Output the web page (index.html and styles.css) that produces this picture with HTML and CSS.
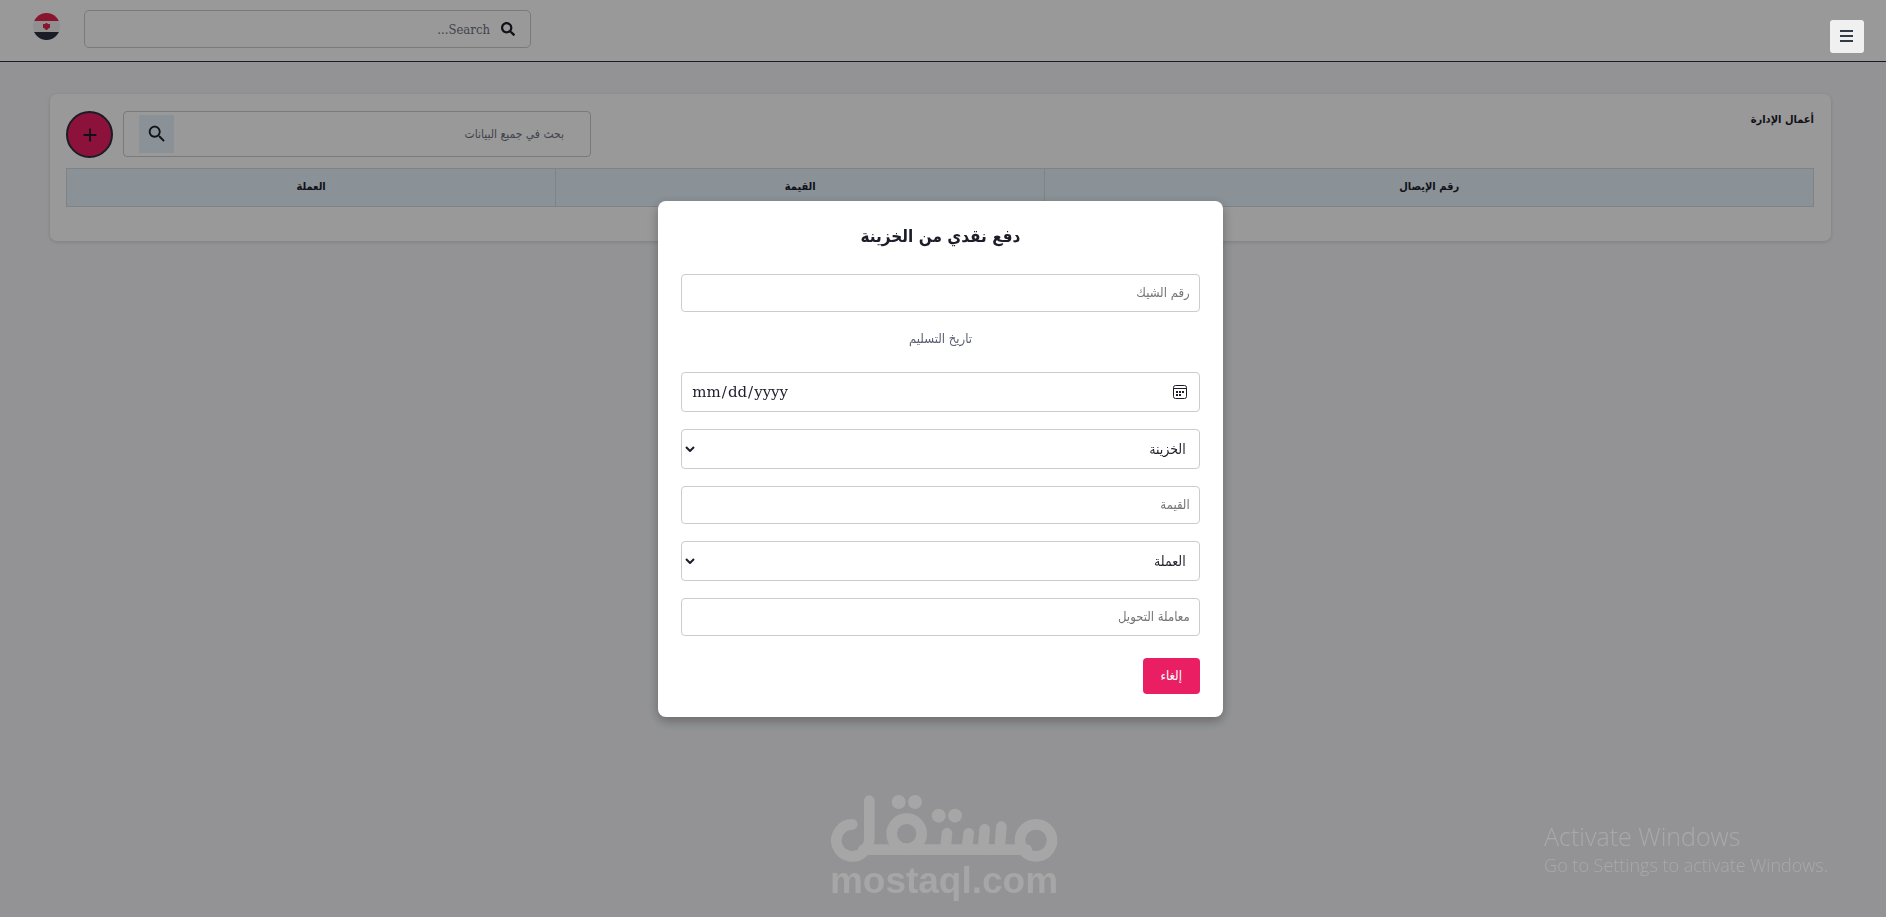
FILE: index.html
```html
<!doctype html>
<html lang="ar" dir="rtl">
<head>
<meta charset="utf-8">
<meta name="viewport" content="width=device-width">
<title>أعمال الإدارة</title>
<link rel="stylesheet" href="styles.css">
</head>
<body>
<div class="page">
	<header class="header">
		<button class="menu-button" type="button" aria-label="القائمة">
			<svg width="13" height="12" viewBox="0 0 13 12"><path d="M0 1h13M0 6h13M0 11h13" stroke="#333a48" stroke-width="2"/></svg>
		</button>
		<div class="header-search">
			<svg width="14" height="14" viewBox="0 0 512 512"><path fill="currentColor" d="M505 442.700L405.300 343c-4.500-4.500-10.600-7-17-7H372c27.600-35.300 44-79.700 44-128C416 93.100 322.900 0 208 0S0 93.100 0 208s93.100 208 208 208c48.300 0 92.700-16.400 128-44v16.300c0 6.400 2.500 12.500 7 17l99.700 99.700c9.400 9.400 24.600 9.400 33.900 0l28.300-28.300c9.400-9.400 9.400-24.600.1-34zM208 336c-70.700 0-128-57.200-128-128 0-70.700 57.200-128 128-128 70.700 0 128 57.200 128 128 0 70.700-57.200 128-128 128z"/></svg>
			<input type="text" placeholder="Search..." aria-label="Search">
		</div>
		<button class="flag" type="button" aria-label="العربية">
			<svg width="27" height="27" viewBox="0 0 27 27">
				<clipPath id="round"><circle cx="13.500" cy="13.500" r="13.500"/></clipPath>
				<g clip-path="url(#round)">
					<path fill="#f0f0f0" d="M0 0h27v27H0z"/>
					<path fill="#e4254f" d="M0 0h27v8H0z"/>
					<path fill="#2e3140" d="M0 19h27v8H0z"/>
					<path fill="#e4254f" d="M10 11h2.500v-1h2v1H17v4h-1.500v1h-1v1h-2v-1h-1v-1H10z"/>
				</g>
			</svg>
		</button>
	</header>

	<main class="main">
		<section class="card">
			<div class="toolbar">
				<h1 class="card-title">أعمال الإدارة</h1>
				<div class="table-search">
					<input type="text" placeholder="بحث في جميع البيانات" aria-label="بحث في جميع البيانات">
					<button class="search-button" type="button" aria-label="بحث">
						<svg width="22" height="22" viewBox="0 0 24 24"><path fill="currentColor" d="M15.500 14h-.79l-.28-.27C15.410 12.590 16 11.110 16 9.500 16 5.910 13.090 3 9.500 3S3 5.910 3 9.500 5.910 16 9.500 16c1.610 0 3.090-.59 4.230-1.570l.27.28v.79l5 4.990L20.490 19l-4.990-5zm-6 0C7.010 14 5 11.990 5 9.500S7.010 5 9.500 5 14 7.010 14 9.500 11.990 14 9.500 14z"/></svg>
					</button>
				</div>
				<button class="add-button" type="button" aria-label="إضافة">
					<svg width="22" height="22" viewBox="0 0 24 24"><path fill="currentColor" d="M19 13h-6v6h-2v-6H5v-2h6V5h2v6h6v2z"/></svg>
				</button>
			</div>
			<table class="table">
				<thead>
					<tr>
						<th class="col-receipt">رقم الإيصال</th>
						<th>القيمة</th>
						<th>العملة</th>
					</tr>
				</thead>
			</table>
		</section>
	</main>
</div>

<div class="overlay">
	<form class="modal" role="dialog" aria-labelledby="modal-title">
		<h2 class="modal-title" id="modal-title">دفع نقدي من الخزينة</h2>
		<input class="field" type="text" placeholder="رقم الشيك" aria-label="رقم الشيك">
		<label class="date-label" for="delivery">تاريخ التسليم</label>
		<div class="control">
			<input class="field field-tall field-date" id="delivery" type="date" lang="en-US" dir="ltr">
			<svg class="calendar" width="14" height="14" viewBox="0 0 14 14">
				<rect x=".5" y=".5" width="13" height="13" rx="2" fill="none" stroke="#1d1d2a"/>
				<path d="M1 3.500h12" stroke="#1d1d2a"/>
				<path d="M3 6h2v2H3zM6 6h2v2H6zM9 6h2v2H9zM3 9h2v2H3zM6 9h2v2H6z" fill="#1d1d2a"/>
			</svg>
		</div>
		<div class="control">
			<select class="field field-tall field-select" aria-label="الخزينة"><option>الخزينة</option></select>
			<svg class="arrow" width="10" height="6" viewBox="0 0 10 6"><path d="M1 1l4 4 4-4" fill="none" stroke="#1d1d2a" stroke-width="2"/></svg>
		</div>
		<input class="field" type="text" placeholder="القيمة" aria-label="القيمة">
		<div class="control">
			<select class="field field-tall field-select" aria-label="العملة"><option>العملة</option></select>
			<svg class="arrow" width="10" height="6" viewBox="0 0 10 6"><path d="M1 1l4 4 4-4" fill="none" stroke="#1d1d2a" stroke-width="2"/></svg>
		</div>
		<input class="field" type="text" placeholder="معاملة التحويل" aria-label="معاملة التحويل">
		<button class="cancel" type="button">إلغاء</button>
	</form>
</div>

<div class="brand" dir="ltr">
	<svg width="227" height="67" viewBox="93 72 681 201" fill="none" stroke="#a6a6a6" stroke-width="32" stroke-linecap="round">
		<path d="M157 160A48 48 0 1 0 190 243Q208 228 208 200V89"/>
		<path d="M190 236H680"/>
		<circle cx="320" cy="188" r="45"/>
		<circle cx="708" cy="208" r="48"/>
		<path d="M441 187l-5 49M506 187l-6 49M554 175l-5 61M604 167l-5 69"/>
		<g fill="#a6a6a6" stroke="none">
			<circle cx="296" cy="93" r="21"/><circle cx="345" cy="93" r="21"/>
			<circle cx="416" cy="134" r="21"/><circle cx="465" cy="134" r="21"/>
		</g>
	</svg>
	<span>mostaql.com</span>
</div>

<div class="activate" dir="ltr">
	<p class="activate-title">Activate Windows</p>
	<p class="activate-text">Go to Settings to activate Windows.</p>
</div>
</body>
</html>
```
FILE: styles.css
```css
* {
	box-sizing: border-box;
}
body {
	margin: 0;
	background-color: #fff;
	color: #1d1d2a;
	font-family: "DejaVu Sans Condensed", "DejaVu Sans", sans-serif;
	font-size: 16px;
}
input, select, button {
	font-family: inherit;
	color: inherit;
}
button {
	display: flex;
	align-items: center;
	justify-content: center;
	padding: 0;
	border: none;
	cursor: pointer;
}
.page {
	min-height: 100vh;
	margin-right: 4px;
	background-color: #f5f6fa;
}

/* top bar */
.header {
	display: flex;
	align-items: flex-start;
	padding: 10px 22px 8px 33px;
	background-color: #fff;
	border-bottom: 1px solid #2d2d40;
}
.menu-button {
	position: relative;
	z-index: 20;
	width: 34px;
	height: 33px;
	margin-top: 10px;
	margin-left: auto;
	padding: 0 2px 2px 0;
	background-color: #f0f0f0;
	border-radius: 3px;
}
.header-search {
	display: flex;
	align-items: center;
	gap: 11px;
	flex: 0 1 447px;
	height: 38px;
	padding: 0 15px;
	border: 1px solid #ccc;
	border-radius: 5px;
}
.header-search input, .table-search input {
	flex: 1;
	min-width: 0;
	padding: 0;
	border: none;
	outline: none;
	background: none;
}
.header-search input {
	font-family: "DejaVu Serif Condensed", "DejaVu Serif", serif;
	font-size: 13px;
}
.header-search input::placeholder, .table-search input::placeholder {
	color: #6b7280;
}
.flag {
	margin-top: 3px;
	margin-right: 24px;
	background: none;
}

/* table card */
.main {
	padding: 32px 55px 0 50px;
}
.card {
	padding: 17px 17px 34px 16px;
	background-color: #fff;
	border-radius: 7px;
	box-shadow: 0 1px 4px rgba(0, 0, 0, 0.15);
}
.toolbar {
	display: flex;
	gap: 10px;
	margin-bottom: 10px;
}
.card-title {
	margin: 0;
	margin-left: auto;
	font-size: 11px;
	line-height: 17px;
}
.table-search {
	display: flex;
	align-items: center;
	flex: 0 1 468px;
	height: 46px;
	padding: 0 26px 0 15px;
	border: 1px solid #ccc;
	border-radius: 4px;
}
.table-search input {
	font-size: 12px;
}
.search-button {
	width: 35px;
	height: 38px;
	background-color: #e6f3fe;
}
.add-button {
	width: 47px;
	height: 47px;
	background-color: #e91e63;
	border: 2px solid #2d2d40;
	border-radius: 50%;
}
.table {
	width: 100%;
	table-layout: fixed;
	border-collapse: collapse;
}
.table th {
	height: 38px;
	padding: 0 0 2px;
	background-color: #e6f3fe;
	border: 1px solid #d5dade;
	font-size: 11px;
}
.table .col-receipt {
	width: 44%;
}

/* payment dialog */
.overlay {
	position: fixed;
	inset: 0;
	right: 4px;
	z-index: 10;
	display: flex;
	align-items: center;
	justify-content: center;
	padding-right: 5px;
	background-color: rgba(0, 0, 0, 0.4);
}
.modal {
	display: flex;
	flex-direction: column;
	gap: 17px;
	width: 30%;
	min-width: 320px;
	padding: 23px;
	background-color: #fff;
	border-radius: 8px;
	box-shadow: 0 4px 12px rgba(0, 0, 0, 0.3);
}
.modal-title {
	margin: 0 0 9px;
	font-size: 17px;
	line-height: 24px;
	text-align: center;
}
.field {
	display: block;
	width: 100%;
	height: 38px;
	padding: 0 9px;
	background-color: #fff;
	border: 1px solid #ccc;
	border-radius: 4px;
	font-size: 13px;
}
.field::placeholder {
	color: #757575;
}
.field-tall {
	height: 40px;
}
.date-label {
	padding-bottom: 7px;
	color: #5b6170;
	font-size: 13px;
	line-height: 19px;
	text-align: center;
}
.control {
	position: relative;
}
.field-date {
	font-family: "DejaVu Serif", serif;
	font-size: 15px;
}
.field-date::-webkit-calendar-picker-indicator {
	opacity: 0;
}
.field-select {
	padding: 0 13px;
	font-size: 14px;
	appearance: none;
}
.calendar {
	position: absolute;
	top: 13px;
	right: 13px;
	pointer-events: none;
}
.arrow {
	position: absolute;
	top: 17px;
	left: 4px;
	pointer-events: none;
}
.cancel {
	width: 57px;
	height: 36px;
	margin-top: 5px;
	background-color: #e91e63;
	border-radius: 4px;
	color: #fff;
	font-size: 13px;
}

/* marks over the page */
.brand {
	position: fixed;
	z-index: 15;
	bottom: 17px;
	left: 0;
	right: 2px;
	display: flex;
	flex-direction: column;
	align-items: center;
	color: #a6a6a6;
	font-family: "Liberation Sans", sans-serif;
	font-size: 37px;
	font-weight: bold;
	line-height: 38px;
	pointer-events: none;
}
.activate {
	position: fixed;
	z-index: 15;
	right: 62px;
	bottom: 40px;
	color: #a9a9a9;
	font-family: "Open Sans", sans-serif;
	font-weight: 300;
	pointer-events: none;
}
.activate p {
	margin: 0;
}
.activate-title {
	font-size: 25px;
	line-height: 34px;
}
.activate-text {
	font-size: 18px;
	line-height: 24px;
}
```
